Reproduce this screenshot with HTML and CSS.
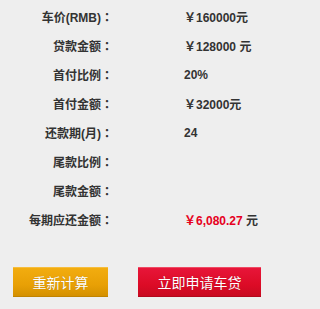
FILE: index.html
```html
<!DOCTYPE html>
<html lang="zh-CN">
<head>
<meta charset="utf-8">
<title>车贷计算</title>
<link rel="stylesheet" href="styles.css">
</head>
<body>
<div class="calc">
  <div class="rows">
    <div class="label">车价(RMB)<span class="colon">：</span></div><div class="value">￥160000元</div>
    <div class="label">贷款金额<span class="colon">：</span></div><div class="value">￥128000 元</div>
    <div class="label">首付比例<span class="colon">：</span></div><div class="value">20%</div>
    <div class="label">首付金额<span class="colon">：</span></div><div class="value">￥32000元</div>
    <div class="label">还款期(月)<span class="colon">：</span></div><div class="value">24</div>
    <div class="label">尾款比例<span class="colon">：</span></div><div class="value"></div>
    <div class="label">尾款金额<span class="colon">：</span></div><div class="value"></div>
    <div class="label">每期应还金额<span class="colon">：</span></div><div class="value"><span class="red">￥6,080.27</span> 元</div>
  </div>
  <div class="buttons">
    <button class="btn btn-orange">重新计算</button>
    <button class="btn btn-red">立即申请车贷</button>
  </div>
</div>
</body>
</html>
```
FILE: styles.css
```css
html, body {
  margin: 0;
  padding: 0;
  background: #eeeeee;
}
body {
  font-family: "Liberation Sans", "Noto Sans CJK SC", sans-serif;
  color: #333333;
}
.calc {
  width: 275px;
  padding-top: 2px;
}
.rows {
  display: grid;
  grid-template-columns: 113px 1fr;
  column-gap: 71px;
  grid-auto-rows: 29px;
  align-items: center;
  font-size: 12px;
  font-weight: bold;
}
.label {
  text-align: right;
  white-space: nowrap;
}
.colon {
  display: inline-block;
  width: 12px;
  text-align: center;
  font-family: "Noto Sans CJK TC", sans-serif;
}
.value {
  white-space: nowrap;
}
.red {
  color: #e60021;
}
.buttons {
  display: flex;
  gap: 30px;
  padding-left: 13px;
  margin-top: 33px;
}
.btn {
  height: 30px;
  border: 0;
  padding: 0;
  margin: 0;
  color: #ffffff;
  font-family: "Noto Sans CJK SC", sans-serif;
  font-size: 14px;
  font-weight: normal;
  cursor: pointer;
  text-shadow: 0 0 1px rgba(0,0,0,0.25);
}
.btn-orange {
  width: 95px;
  background: linear-gradient(#f3ad10, #e8a005 60%, #d28f00);
  box-shadow: inset 0 -1px 0 #c08300, inset 0 1px 0 #f6bd3c;
}
.btn-red {
  width: 123px;
  background: linear-gradient(#e8163a, #dc0b26 60%, #c70a20);
  box-shadow: inset 0 -1px 0 #b2081c, inset 0 1px 0 #ee4a63;
}
```
